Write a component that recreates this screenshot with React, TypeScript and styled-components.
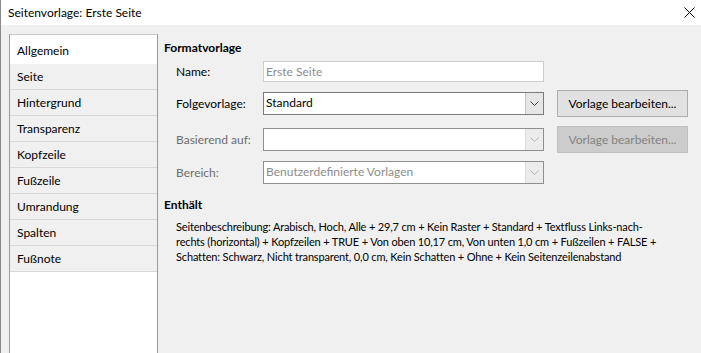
import styled, { createGlobalStyle } from 'styled-components';

const GlobalStyle = createGlobalStyle`
  html, body { margin: 0; padding: 0; }
  body {
    background: #f0f0f0;
    font-family: Lato, "Liberation Sans", sans-serif;
    font-size: 12px;
    color: #000;
  }
`;

const Window = styled.div({
  width: 701,
  height: 353,
  overflow: 'hidden',
  background: '#f0f0f0',
  borderLeft: '1px solid #8a8a8a',
  boxSizing: 'border-box',
  display: 'flex',
  flexDirection: 'column',
});

const TitleBar = styled.div({
  height: 25,
  flex: '0 0 25px',
  background: '#fff',
  display: 'flex',
  alignItems: 'center',
  justifyContent: 'space-between',
  padding: '0 6px 0 7px',
  fontSize: 12,
});

const Body = styled.div({
  flex: 1,
  display: 'flex',
  padding: '9px 0 0 8px',
  minHeight: 0,
});

const SideList = styled.ul({
  margin: 0,
  padding: '3px 0 0',
  listStyle: 'none',
  width: 147,
  flex: '0 0 147px',
  height: 340,
  background: '#fff',
  border: '1px solid #9a9a9a',
  borderTopColor: '#c8c8c8',
});

const SideItem = styled.li<{ selected?: boolean }>(({ selected }) => ({
  height: 25,
  lineHeight: '25px',
  paddingLeft: 7,
  background: selected ? '#fff' : '#f0f0f0',
  borderBottom: `1px solid ${selected ? '#fff' : '#d9d9d9'}`,
  whiteSpace: 'nowrap',
}));

const Panel = styled.div({
  flex: 1,
  paddingLeft: 6,
  paddingTop: 5,
});

const Heading = styled.div({
  fontWeight: 700,
  height: 18,
  lineHeight: '18px',
});

const Form = styled.div({
  display: 'flex',
  flexDirection: 'column',
  paddingLeft: 12,
  marginTop: 4,
});

const Row = styled.div<{ h: number; gap: number }>(({ h, gap }) => ({
  display: 'flex',
  alignItems: 'center',
  height: h,
  marginBottom: gap,
}));

const Label = styled.div<{ disabled?: boolean }>(({ disabled }) => ({
  width: 87,
  flex: '0 0 87px',
  color: disabled ? '#6d6d6d' : '#000',
}));

const TextInput = styled.div({
  width: 281,
  height: 21,
  boxSizing: 'border-box',
  border: '1px solid #cccccc',
  background: '#fff',
  color: '#8c8c8c',
  lineHeight: '19px',
  paddingLeft: 2,
});

const Combo = styled.div<{ disabled?: boolean }>(({ disabled }) => ({
  width: 281,
  height: 23,
  boxSizing: 'border-box',
  border: `1px solid ${disabled ? '#8f8f8f' : '#7a7a7a'}`,
  background: '#fff',
  display: 'flex',
  color: disabled ? '#8c8c8c' : '#000',
}));

const ComboText = styled.div({
  flex: 1,
  lineHeight: '20px',
  paddingLeft: 2,
  whiteSpace: 'nowrap',
});

const ComboArrow = styled.div<{ disabled?: boolean }>(({ disabled }) => ({
  width: 17,
  background: disabled ? '#ececec' : '#e6e6e6',
  borderLeft: `1px solid ${disabled ? '#dcdcdc' : '#c4c4c4'}`,
  display: 'flex',
  alignItems: 'center',
  justifyContent: 'center',
}));

const Button = styled.div<{ disabled?: boolean }>(({ disabled }) => ({
  marginLeft: 13,
  width: 131,
  height: 27,
  boxSizing: 'border-box',
  border: `1px solid ${disabled ? '#bfbfbf' : '#adadad'}`,
  background: disabled ? '#cccccc' : '#e1e1e1',
  color: disabled ? '#838383' : '#000',
  display: 'flex',
  alignItems: 'center',
  justifyContent: 'center',
  whiteSpace: 'nowrap',
}));

const Section = styled.div({
  marginTop: 12,
});

const Description = styled.div({
  paddingLeft: 12,
  marginTop: 5,
  fontSize: 11,
  letterSpacing: '-0.15px',
  lineHeight: '15px',
  whiteSpace: 'nowrap',
});

const Arrow = ({ color }: { color: string }) => (
  <svg width="9" height="5" viewBox="0 0 9 5">
    <path d="M0.5 0.5 L4.5 4.5 L8.5 0.5" fill="none" stroke={color} strokeWidth="1" />
  </svg>
);

const CloseIcon = () => (
  <svg width="11" height="11" viewBox="0 0 11 11">
    <path d="M0.5 0.5 L10.5 10.5 M10.5 0.5 L0.5 10.5" stroke="#000" strokeWidth="1" />
  </svg>
);

const pages = [
  'Allgemein',
  'Seite',
  'Hintergrund',
  'Transparenz',
  'Kopfzeile',
  'Fußzeile',
  'Umrandung',
  'Spalten',
  'Fußnote',
];

export default function App() {
  return (
    <>
      <GlobalStyle />
      <Window>
        <TitleBar>
          <span>Seitenvorlage: Erste Seite</span>
          <CloseIcon />
        </TitleBar>
        <Body>
          <SideList>
            {pages.map((p, i) => (
              <SideItem key={p} selected={i === 0}>
                {p}
              </SideItem>
            ))}
          </SideList>
          <Panel>
            <Heading>Formatvorlage</Heading>
            <Form>
              <Row h={21} gap={8}>
                <Label>Name:</Label>
                <TextInput>Erste Seite</TextInput>
              </Row>
              <Row h={27} gap={9}>
                <Label>Folgevorlage:</Label>
                <Combo>
                  <ComboText>Standard</ComboText>
                  <ComboArrow>
                    <Arrow color="#444" />
                  </ComboArrow>
                </Combo>
                <Button>Vorlage bearbeiten...</Button>
              </Row>
              <Row h={27} gap={8}>
                <Label disabled>Basierend auf:</Label>
                <Combo disabled>
                  <ComboText />
                  <ComboArrow disabled>
                    <Arrow color="#b5b5b5" />
                  </ComboArrow>
                </Combo>
                <Button disabled>Vorlage bearbeiten...</Button>
              </Row>
              <Row h={23} gap={0}>
                <Label disabled>Bereich:</Label>
                <Combo disabled>
                  <ComboText>Benutzerdefinierte Vorlagen</ComboText>
                  <ComboArrow disabled>
                    <Arrow color="#b5b5b5" />
                  </ComboArrow>
                </Combo>
              </Row>
            </Form>
            <Section>
              <Heading>Enthält</Heading>
              <Description>
                Seitenbeschreibung: Arabisch, Hoch, Alle + 29,7 cm + Kein Raster + Standard + Textfluss Links-nach-
                <br />
                rechts (horizontal) + Kopfzeilen + TRUE + Von oben 10,17 cm, Von unten 1,0 cm + Fußzeilen + FALSE +
                <br />
                Schatten: Schwarz, Nicht transparent, 0,0 cm, Kein Schatten + Ohne + Kein Seitenzeilenabstand
              </Description>
            </Section>
          </Panel>
        </Body>
      </Window>
    </>
  );
}
